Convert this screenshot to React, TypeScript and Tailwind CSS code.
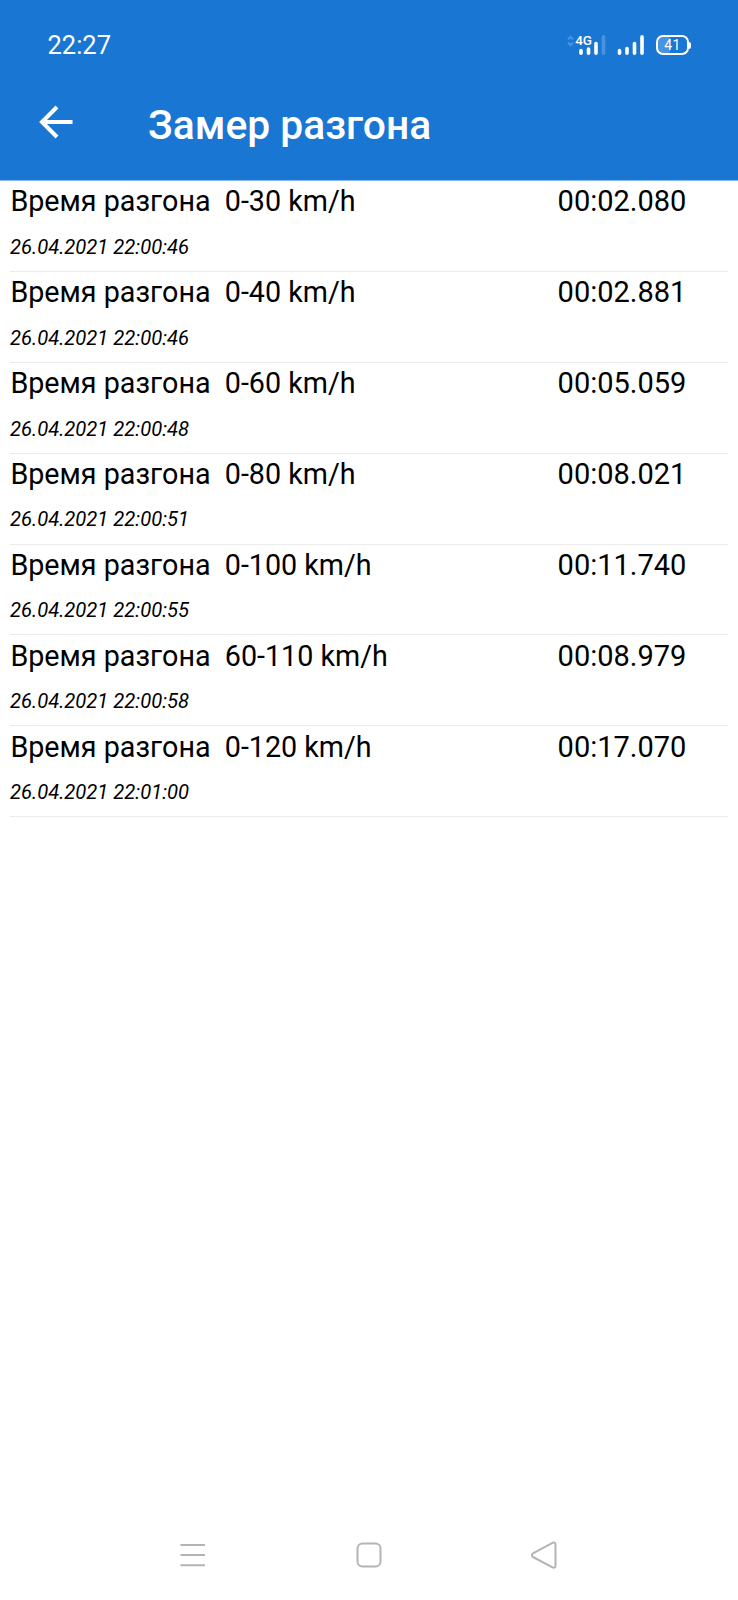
import React from "react";

const RUNS = [
  { range: "0-30 km/h", time: "00:02.080", date: "26.04.2021 22:00:46" },
  { range: "0-40 km/h", time: "00:02.881", date: "26.04.2021 22:00:46" },
  { range: "0-60 km/h", time: "00:05.059", date: "26.04.2021 22:00:48" },
  { range: "0-80 km/h", time: "00:08.021", date: "26.04.2021 22:00:51" },
  { range: "0-100 km/h", time: "00:11.740", date: "26.04.2021 22:00:55" },
  { range: "60-110 km/h", time: "00:08.979", date: "26.04.2021 22:00:58" },
  { range: "0-120 km/h", time: "00:17.070", date: "26.04.2021 22:01:00" },
];

const StatusBar: React.FC = () => (
  <div className="flex h-[90px] items-center justify-between pl-[47.5px] pr-[47px]">
    <span className="text-[25.5px] leading-[30px]">22:27</span>
    <div className="flex items-center">
      {/* 4G signal */}
      <div className="relative h-[22px] w-[40px]">
        <svg className="h-[22px] w-[40px] overflow-visible" viewBox="0 0 40 22" fill="none">
          <path d="M0 5.500L2.500 2.800L5 5.500M0 8.500L2.500 11.200L5 8.500" stroke="#4a93e0" strokeWidth="2" />
          <path d="M13 16.500V19.300M20.500 15V19.300M28 9.500V19.300" stroke="#fff" strokeWidth="3.600" strokeLinecap="round" />
          <path d="M35.500 2.800V19.300" stroke="#4a93e0" strokeWidth="3.600" strokeLinecap="round" />
        </svg>
        <span className="absolute left-[7.300px] top-[-1px] text-[13.5px] font-medium leading-[15px] tracking-[-0.3px]">4G</span>
      </div>
      {/* Second SIM */}
      <svg className="ml-[9px] h-[22px] w-[28px]" viewBox="0 0 28 22" stroke="#fff" strokeWidth="3.600" strokeLinecap="round">
        <path d="M2.500 16.500V19.300M10 14.500V19.300M17.500 9.500V19.300M25 2.800V19.300" />
      </svg>
      {/* Battery */}
      <div className="ml-[11px] flex items-center">
        <div className="flex h-[20px] w-[33px] items-center justify-center rounded-[7px] border-2 border-white bg-[linear-gradient(90deg,#4a93e0_41%,transparent_41%)] text-[14px] leading-none tracking-[0.5px]">
          41
        </div>
        <div className="h-[7px] w-[2px] rounded-r-full bg-white" />
      </div>
    </div>
  </div>
);

const NavBar: React.FC = () => (
  <div className="flex h-[90px] items-center justify-between pl-[179px] pr-[180px]">
    <svg className="h-[28px] w-[28px]" viewBox="0 0 28 28" stroke="#b4b4b4" strokeWidth="2">
      <path d="M1.500 4H26M1.500 14H26M1.500 24.300H26" />
    </svg>
    <svg className="h-[28px] w-[28px]" viewBox="0 0 28 28" fill="none" stroke="#b4b4b4" strokeWidth="2">
      <rect x="2.500" y="2.500" width="23" height="23" rx="5" />
    </svg>
    <svg className="h-[28px] w-[28px]" viewBox="0 0 28 28" fill="none" stroke="#b4b4b4" strokeWidth="2" strokeLinejoin="round">
      <path d="M3 12.300L22.500 1.800Q25.500 0.800 25.500 3.800V24.500Q25.500 27.500 22.500 26.300L3 16Q0.800 14.200 3 12.300Z" />
    </svg>
  </div>
);

export default function App() {
  return (
    <div className="flex h-[1600px] w-[738px] flex-col bg-white font-[Roboto,sans-serif] text-black">
      <header className="h-[181px] border-b border-[#8bbbea] bg-[#1976d2] text-white">
        <StatusBar />
        <div className="flex h-[70px] items-center pl-[39px]">
          <svg className="mb-[6px] h-[34px] w-[34px]" viewBox="0 0 34 34" fill="none" stroke="#fff" strokeWidth="4">
            <path d="M33.500 17H4M18 2L3 17L18 32" />
          </svg>
          <h1 className="ml-[75px] text-[40.8px] font-medium leading-[48px]">Замер разгона</h1>
        </div>
      </header>

      <main className="flex-1 px-[10px]">
        {RUNS.map((run) => (
          <div key={run.range} className="h-[90.9px] border-b border-[#ebebeb]">
            <div className="flex pt-[3.4px] leading-[34px]">
              <span className="w-[547.6px] whitespace-pre pl-[0.4px] text-[28.7px] [font-kerning:none]">{`Время разгона  ${run.range}`}</span>
              <span className="text-[29px] [font-kerning:none]">{run.time}</span>
            </div>
            <div className="mt-[16.4px] text-[20.2px] italic leading-[24px]">{run.date}</div>
          </div>
        ))}
      </main>

      <NavBar />
    </div>
  );
}
